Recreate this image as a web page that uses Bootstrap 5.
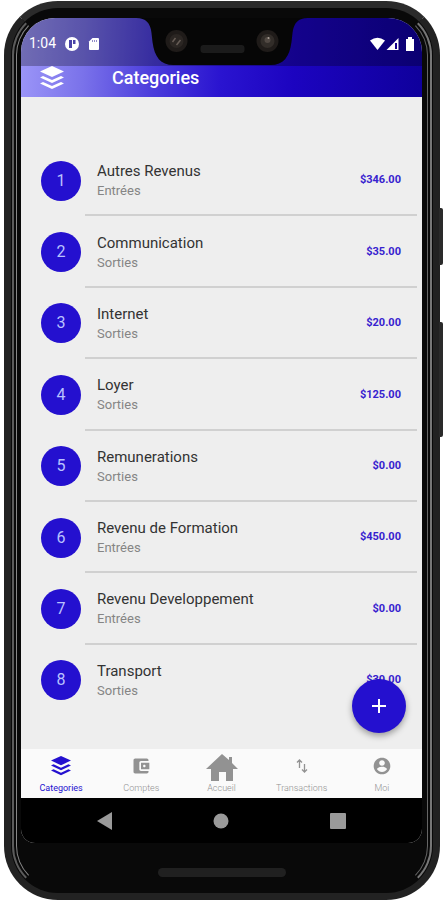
<!DOCTYPE html>
<html lang="fr">
<head>
<meta charset="utf-8">
<meta name="viewport" content="width=device-width, initial-scale=1">
<title>Categories</title>
<link href="https://cdn.jsdelivr.net/npm/bootstrap@5.3.0/dist/css/bootstrap.min.css" rel="stylesheet">
<script src="https://cdn.jsdelivr.net/npm/bootstrap@5.3.0/dist/js/bootstrap.bundle.min.js" defer></script>
<style>
:root { --ink: #2410cf; }
body { font-family: Roboto, "Liberation Sans", sans-serif; background: #fff; }
.stage { min-height: 100vh; padding: 1px 6px 0 4px; }
.phone { background: #090909; border: 7px solid #222; border-top-color: #2b2b2b; border-radius: 54px; padding: 10px 11px 10px 10px; }
.phone-rim, .phone-rim-inner { position: absolute; pointer-events: none; border: 0 solid transparent; }
.phone-rim { inset: 1px; border-width: 2px; border-left-color: #5c5c5c; border-right-color: #777; border-radius: 46px; }
.phone-rim-inner { inset: 5px; border-width: 1px; border-left-color: #888; border-right-color: #666; border-radius: 42px; }
.side-key { position: absolute; right: -10px; width: 4px; background: #2a2a2a; border-radius: 0 2px 2px 0; }
.key-power { top: 200px; height: 57px; }
.key-volume { top: 314px; height: 115px; }
.screen { background: #eee; border-radius: 34px 34px 14px 14px; overflow: hidden; }
.app-head { background: linear-gradient(93deg, #9c96f8 0%, #7a72ea 16%, #4c3edc 33%, #2a14d0 50%, #1c04c0 68%, #0f009c 100%); color: #fff; }
.status { height: 48px; padding: 3px 7px 0 8px; background: rgba(0, 0, 0, .27); font-size: 14px; }
.notch { position: absolute; top: 0; left: 50%; transform: translateX(-50%); }
.title-bar { height: 31px; padding: 0 18px; gap: 47px; }
.title-bar h1 { font-size: 18px; line-height: 20px; font-weight: 500; padding-bottom: 8px; }
.content { padding: 48px 5px 33px 20px; }
.entry { flex: 1 1 0; min-height: 60px; }
.entry-no { width: 40px; height: 40px; background: var(--ink); background-clip: content-box; padding: 0; color: #b9c2ff; font-size: 16px; }
.entry-body { margin-left: 4px; padding: 0 16px 0 12px; border-bottom: 2px solid #d0d0d0; }
.entry:last-child .entry-body { border-color: transparent; }
.entry-text { padding-top: 3px; }
.entry-name { font-size: 15px; line-height: 20px; color: #333; }
.entry-kind { font-size: 13px; line-height: 20px; color: #858585; }
.entry-sum { font-size: 11px; font-weight: 700; color: #3722cf; padding-top: 2px; }
.add { position: absolute; right: 16px; bottom: 16px; width: 54px; height: 54px; background: var(--ink); border: 0; color: #fff; box-shadow: 0 3px 6px rgba(0, 0, 0, .35); }
.tabs { height: 49px; background: #fafafa; }
.tabs a { flex: 1 1 0; color: #929292; font-size: 9px; line-height: 10px; font-weight: 300; padding-bottom: 5px; }
.tabs a.active { color: var(--ink); font-weight: 400; }
.tab-icon { height: 34px; }
.sys { height: 45px; padding: 0 26px; background: #000; }
.sys button { flex: 1 1 0; background: none; border: 0; padding: 0; color: #9a9a9a; }
.chin { height: 40px; }
.chin-slot { width: 128px; height: 9px; margin-top: 18px; background: #202020; }
</style>
</head>
<body>
<div class="stage d-flex">
  <div class="phone position-relative flex-grow-1 d-flex flex-column">
    <div class="phone-rim"></div>
    <div class="phone-rim-inner"></div>
    <div class="side-key key-power"></div>
    <div class="side-key key-volume"></div>
    <div class="screen flex-grow-1 d-flex flex-column">
      <header class="app-head position-relative">
        <div class="status d-flex align-items-center justify-content-between">
          <div class="d-flex align-items-center">
            <span>1:04</span>
            <svg class="ms-2" width="16" height="16" viewBox="0 0 16 16" aria-hidden="true"><circle cx="8" cy="8" r="7" fill="#fff"/><path d="M5 4h3v8H5zM9 4h2.500v4H9z" fill="#4a43a8"/></svg>
            <svg class="ms-2" width="12" height="14" viewBox="0 0 12 14" aria-hidden="true"><path d="M4.500 1H10a1 1 0 0 1 1 1v10a1 1 0 0 1-1 1H2a1 1 0 0 1-1-1V4.500z" fill="#fff"/><path d="M4.500 3v2M6.500 3v2M8.500 3v2" stroke="#7770bd" stroke-width=".8"/></svg>
          </div>
          <svg width="45" height="14" viewBox="0 0 45 14" fill="#fff" aria-hidden="true"><path d="M0 3.500Q7.500-2 15 3.500L7.500 13z"/><path d="M28.500 1v12H16.500z"/><path d="M25 6h2v6h-2z" fill="#15008b"/><path d="M36 2h2V0h4v2h2v12h-8z"/></svg>
        </div>
        <svg class="notch" width="171" height="48" viewBox="0 0 171 48" aria-hidden="true">
          <path d="M0 0C9 0 14 5 15 15L16 24C18 39 24 47 37 47H134C147 47 153 39 155 24L156 15C157 5 162 0 171 0Z" fill="#060606"/>
          <circle cx="40" cy="23" r="11" fill="#1f1b19"/><circle cx="40" cy="23" r="7" fill="#2b2623"/><path d="M36 24l3-4M40 27l4-5" stroke="#665c55" stroke-width="1.500"/>
          <rect x="64" y="27" width="44" height="8" rx="3" fill="#1b1b1b"/>
          <circle cx="131" cy="23" r="11" fill="#1f1b19"/><circle cx="131" cy="23" r="7" fill="#322d29"/><circle cx="131" cy="22" r="3" fill="#514943"/><circle cx="132" cy="20" r="1" fill="#aaa097"/>
        </svg>
        <div class="title-bar d-flex align-items-center">
          <svg width="26" height="24" viewBox="0 0 26 24" fill="#fff" class="mb-2" aria-hidden="true"><path d="M13 0l12 5.500L13 11 1 5.500z"/><path d="M1 11.500l3-1.500 9 4 9-4 3 1.500L13 17z"/><path d="M1 17.500l3-1.500 9 4 9-4 3 1.500L13 23z"/></svg>
          <h1 class="mb-0">Categories</h1>
        </div>
      </header>
      <main class="content position-relative flex-grow-1 d-flex flex-column">
        <ul class="list-unstyled mb-0 flex-grow-1 d-flex flex-column">
          <li class="entry d-flex"><span class="entry-no rounded-circle d-flex align-items-center justify-content-center flex-shrink-0 align-self-center">1</span><div class="entry-body flex-grow-1 d-flex align-items-center justify-content-between"><div class="entry-text"><div class="entry-name">Autres Revenus</div><div class="entry-kind">Entrées</div></div><span class="entry-sum">$346.00</span></div></li>
          <li class="entry d-flex"><span class="entry-no rounded-circle d-flex align-items-center justify-content-center flex-shrink-0 align-self-center">2</span><div class="entry-body flex-grow-1 d-flex align-items-center justify-content-between"><div class="entry-text"><div class="entry-name">Communication</div><div class="entry-kind">Sorties</div></div><span class="entry-sum">$35.00</span></div></li>
          <li class="entry d-flex"><span class="entry-no rounded-circle d-flex align-items-center justify-content-center flex-shrink-0 align-self-center">3</span><div class="entry-body flex-grow-1 d-flex align-items-center justify-content-between"><div class="entry-text"><div class="entry-name">Internet</div><div class="entry-kind">Sorties</div></div><span class="entry-sum">$20.00</span></div></li>
          <li class="entry d-flex"><span class="entry-no rounded-circle d-flex align-items-center justify-content-center flex-shrink-0 align-self-center">4</span><div class="entry-body flex-grow-1 d-flex align-items-center justify-content-between"><div class="entry-text"><div class="entry-name">Loyer</div><div class="entry-kind">Sorties</div></div><span class="entry-sum">$125.00</span></div></li>
          <li class="entry d-flex"><span class="entry-no rounded-circle d-flex align-items-center justify-content-center flex-shrink-0 align-self-center">5</span><div class="entry-body flex-grow-1 d-flex align-items-center justify-content-between"><div class="entry-text"><div class="entry-name">Remunerations</div><div class="entry-kind">Sorties</div></div><span class="entry-sum">$0.00</span></div></li>
          <li class="entry d-flex"><span class="entry-no rounded-circle d-flex align-items-center justify-content-center flex-shrink-0 align-self-center">6</span><div class="entry-body flex-grow-1 d-flex align-items-center justify-content-between"><div class="entry-text"><div class="entry-name">Revenu de Formation</div><div class="entry-kind">Entrées</div></div><span class="entry-sum">$450.00</span></div></li>
          <li class="entry d-flex"><span class="entry-no rounded-circle d-flex align-items-center justify-content-center flex-shrink-0 align-self-center">7</span><div class="entry-body flex-grow-1 d-flex align-items-center justify-content-between"><div class="entry-text"><div class="entry-name">Revenu Developpement</div><div class="entry-kind">Entrées</div></div><span class="entry-sum">$0.00</span></div></li>
          <li class="entry d-flex"><span class="entry-no rounded-circle d-flex align-items-center justify-content-center flex-shrink-0 align-self-center">8</span><div class="entry-body flex-grow-1 d-flex align-items-center justify-content-between"><div class="entry-text"><div class="entry-name">Transport</div><div class="entry-kind">Sorties</div></div><span class="entry-sum">$30.00</span></div></li>
        </ul>
        <button type="button" class="add rounded-circle d-flex align-items-center justify-content-center" aria-label="Ajouter"><svg width="16" height="16" viewBox="0 0 16 16" stroke="#fff" stroke-width="2" aria-hidden="true"><path d="M8 1v14M1 8h14"/></svg></button>
      </main>
      <nav class="tabs d-flex">
        <a href="#" class="active text-decoration-none text-center"><span class="tab-icon d-flex align-items-center justify-content-center"><svg width="22" height="20" viewBox="0 0 26 24" fill="currentColor" aria-hidden="true"><path d="M13 0l12 5.500L13 11 1 5.500z"/><path d="M1 11.500l3-1.500 9 4 9-4 3 1.500L13 17z"/><path d="M1 17.500l3-1.500 9 4 9-4 3 1.500L13 23z"/></svg></span>Categories</a>
        <a href="#" class="text-decoration-none text-center"><span class="tab-icon d-flex align-items-center justify-content-center"><svg width="20" height="20" viewBox="0 0 24 24" fill="currentColor" aria-hidden="true"><path d="M21 18v1c0 1.100-.9 2-2 2H5c-1.110 0-2-.9-2-2V5c0-1.100.89-2 2-2h14c1.100 0 2 .9 2 2v1h-9c-1.110 0-2 .9-2 2v8c0 1.100.89 2 2 2h9zm-9-2h10V8H12v8zm4-2.500c-.83 0-1.500-.67-1.500-1.500s.67-1.500 1.500-1.500 1.500.67 1.500 1.500-.67 1.500-1.500 1.500z"/></svg></span>Comptes</a>
        <a href="#" class="text-decoration-none text-center"><span class="tab-icon d-flex align-items-end justify-content-center"><svg width="32" height="30" viewBox="0 0 32 30" fill="currentColor" aria-hidden="true"><path d="M16 1l7 6V4h3v6l6 6h-5v12h-7v-9h-7v9H5V16H0z"/></svg></span>Accueil</a>
        <a href="#" class="text-decoration-none text-center"><span class="tab-icon d-flex align-items-center justify-content-center"><svg width="12" height="16" viewBox="0 0 12 16" fill="none" stroke="currentColor" stroke-width="1.300" aria-hidden="true"><path d="M3.500 10V2M1 4.500L3.500 2 6 4.500M8.500 6v8M6 11.500L8.500 14l2.500-2.500"/></svg></span>Transactions</a>
        <a href="#" class="text-decoration-none text-center"><span class="tab-icon d-flex align-items-center justify-content-center"><svg width="20" height="20" viewBox="0 0 24 24" fill="currentColor" aria-hidden="true"><path d="M12 2C6.480 2 2 6.480 2 12s4.480 10 10 10 10-4.480 10-10S17.520 2 12 2zm0 3c1.900 0 3.400 1.500 3.400 3.400S13.900 11.800 12 11.800 8.600 10.300 8.600 8.400 10.100 5 12 5zm0 14.200c-2.500 0-4.700-1.280-6-3.220.03-1.990 4-3.080 6-3.080s5.970 1.090 6 3.080c-1.290 1.940-3.500 3.220-6 3.220z"/></svg></span>Moi</a>
      </nav>
      <div class="sys d-flex align-items-center">
        <button type="button" aria-label="Retour"><svg width="16" height="18" viewBox="0 0 16 18" fill="currentColor"><path d="M0 9L15 0v18z"/></svg></button>
        <button type="button" aria-label="Accueil"><svg width="16" height="16" viewBox="0 0 16 16" fill="currentColor"><circle cx="8" cy="8" r="7.500"/></svg></button>
        <button type="button" aria-label="Applications"><svg width="16" height="16" viewBox="0 0 16 16" fill="currentColor"><rect width="16" height="16" rx="1"/></svg></button>
      </div>
    </div>
    <div class="chin d-flex align-items-center justify-content-center"><div class="chin-slot rounded-pill"></div></div>
  </div>
</div>
</body>
</html>
